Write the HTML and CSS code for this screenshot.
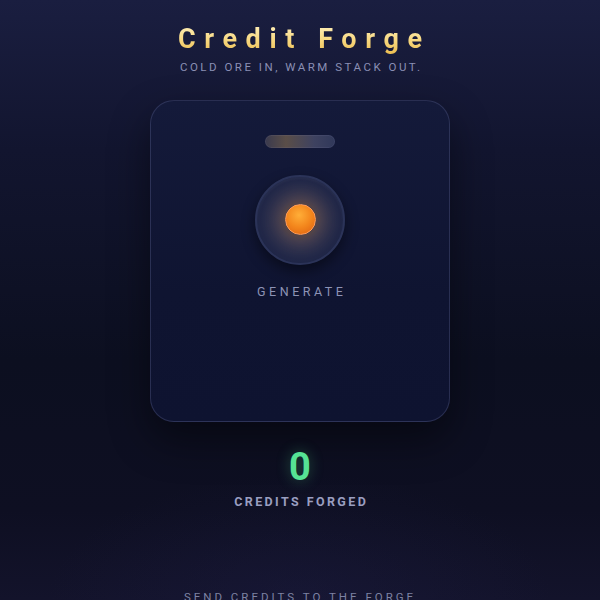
FILE: index.html
```html
<!DOCTYPE html>
<html>
<head>
<meta charset="utf-8">
<link rel="stylesheet" href="styles.css">
</head>
<body>
<main class="page">
  <header class="head">
    <h1 class="title">Credit Forge</h1>
    <p class="subtitle">COLD ORE IN, WARM STACK OUT.</p>
  </header>
  <section class="card">
    <div class="meter"></div>
    <button class="gen" type="button"><span class="orb"></span></button>
    <div class="gen-label">GENERATE</div>
  </section>
  <section class="stats">
    <div class="count">0</div>
    <div class="count-label">CREDITS FORGED</div>
  </section>
  <footer class="foot">SEND CREDITS TO THE FORGE</footer>
</main>
</body>
</html>
```
FILE: styles.css
```css
html, body { margin: 0; padding: 0; }
body {
  width: 600px;
  height: 600px;
  overflow: hidden;
  font-family: Roboto, "Liberation Sans", sans-serif;
  background:
    radial-gradient(ellipse 60% 30% at 50% 100%, rgba(30,30,70,0.35), transparent 70%),
    linear-gradient(180deg, #1a1e40 0%, #12152f 25%, #0c0f20 60%, #0e0f22 85%, #13132b 100%);
  color: #8d93b5;
}
.page {
  display: flex;
  flex-direction: column;
  align-items: center;
}
.head { text-align: center; padding-top: 22px; }
.title {
  margin: 0;
  font-size: 27px;
  font-weight: 700;
  letter-spacing: 8.6px;
  line-height: 34px;
  padding-left: 8.6px;
  background: linear-gradient(180deg, #fff3c4 0%, #f7d77e 55%, #e9b94a 100%);
  -webkit-background-clip: text;
  background-clip: text;
  color: transparent;
}
.subtitle {
  margin: 4px 0 0;
  font-size: 11.5px;
  letter-spacing: 2.5px;
  line-height: 14px;
  color: #8a8fb4;
  padding-left: 2.5px;
}
.card {
  margin-top: 26px;
  width: 298px;
  height: 320px;
  border: 1px solid rgba(110,120,170,0.28);
  border-radius: 24px;
  background: linear-gradient(180deg, #141a3a 0%, #0f1431 60%, #0e1330 100%);
  box-shadow: 0 18px 40px rgba(0,0,0,0.45);
  display: flex;
  flex-direction: column;
  align-items: center;
}
.meter {
  margin-top: 34px;
  width: 70px;
  height: 13px;
  border-radius: 7px;
  background: linear-gradient(90deg, #3a3a4e 0%, #5a4e48 30%, #3e4260 70%, #30385a 100%);
  box-shadow: inset 0 0 0 1px rgba(140,140,180,0.12);
}
.gen {
  margin-top: 27px;
  width: 90px;
  height: 90px;
  border-radius: 50%;
  border: 2px solid #2b3358;
  padding: 0;
  background: radial-gradient(circle at 50% 50%, #4a3f3a 0%, #2f3352 35%, #1d2445 75%, #1a2040 100%);
  box-shadow: 0 6px 14px rgba(0,0,0,0.45), inset 0 2px 3px rgba(255,255,255,0.04);
  display: flex;
  align-items: center;
  justify-content: center;
}
.orb {
  width: 29px;
  height: 29px;
  border-radius: 50%;
  background: radial-gradient(circle at 45% 35%, #ffae38 0%, #f3861c 50%, #dc5e10 100%);
  border: 1.5px solid #ff9d5a;
  box-shadow: 0 0 18px 8px rgba(245,150,50,0.22);
  margin-top: -1px;
}
.gen-label {
  margin-top: 19px;
  font-size: 12.5px;
  letter-spacing: 3.5px;
  padding-left: 3.5px;
  color: #8d93b5;
  line-height: 16px;
}
.stats {
  margin-top: 23px;
  text-align: center;
}
.count {
  font-size: 38px;
  font-weight: 700;
  line-height: 44px;
  color: #56e394;
  text-shadow: 0 0 14px rgba(80,220,140,0.35);
}
.count-label {
  margin-top: 5px;
  font-size: 12.5px;
  font-weight: 700;
  letter-spacing: 2.4px;
  padding-left: 2.4px;
  color: #9a9ec0;
  line-height: 16px;
}
.foot {
  margin-top: 80px;
  font-size: 11.5px;
  letter-spacing: 3px;
  color: #7d82a2;
  line-height: 14px;
}
```
